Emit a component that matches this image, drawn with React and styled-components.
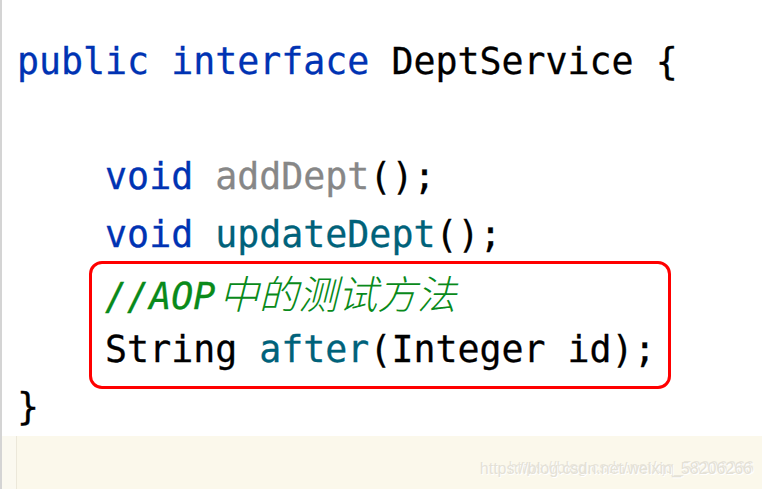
import React from "react";
import styled, { createGlobalStyle } from "styled-components";

const Global = createGlobalStyle`
  html, body {
    margin: 0;
    padding: 0;
    background: #ffffff;
    overflow: hidden;
  }
`;

const Editor = styled.div`
  width: 762px;
  height: 489px;
  box-sizing: border-box;
  border-left: 2px solid #d4d4d4;
  padding-top: 33px;
  overflow: hidden;
  font-family: "DejaVu Sans Mono", "Liberation Mono", monospace;
  font-size: 36.6px;
  color: #000000;
  -webkit-text-stroke: 0.3px currentColor;
`;

const Line = styled.div`
  height: 57.5px;
  line-height: 57.5px;
  padding-left: 15px;
  white-space: pre;
`;

const Kw = styled.span`
  color: #0033b3;
`;

const Fn = styled.span`
  color: ${(p) => (p.$unused ? "#878787" : "#00627a")};
`;

const Comment = styled.span`
  color: #098a1a;
  font-style: italic;
`;

const Cjk = styled.span`
  font-family: "Noto Sans CJK SC", sans-serif;
  font-size: 39.5px;
  font-weight: 300;
  -webkit-text-stroke: 0;
  margin-left: 4px;
`;

const Marked = styled.div`
  position: relative;

  &::before {
    content: "";
    position: absolute;
    top: -2px;
    bottom: -11px;
    left: 87px;
    width: 582px;
    box-sizing: border-box;
    border: 3px solid #ff0000;
    border-radius: 13px;
    pointer-events: none;
  }
`;

const CurrentLine = styled.div`
  position: relative;
  display: flex;
  height: 57.5px;
  background: #fbf8eb;
`;

const FoldCell = styled.div`
  width: 14px;
  background: #fbf9f0;
  border-right: 1px solid #ece8da;
`;

const Watermark = styled.span`
  position: absolute;
  right: 10px;
  top: 24px;
  font-family: "Liberation Sans", Arial, sans-serif;
  font-size: 16px;
  color: #e4e1d6;
  -webkit-text-stroke: 0;
  text-shadow: 1px 1px 0 #ffffff;
  white-space: nowrap;
`;

const WatermarkGhost = styled(Watermark)`
  right: 8px;
  top: 23px;
  color: #e8e5da;
`;

export default function App() {
  return (
    <>
      <Global />
      <Editor>
        <Line>
          <Kw>public</Kw> <Kw>interface</Kw> DeptService {"{"}
        </Line>
        <Line />
        <Line>
          {"    "}
          <Kw>void</Kw> <Fn $unused>addDept</Fn>();
        </Line>
        <Line>
          {"    "}
          <Kw>void</Kw> <Fn>updateDept</Fn>();
        </Line>
        <Marked>
          <Line>
            {"    "}
            <Comment>
              //AOP<Cjk>中的测试方法</Cjk>
            </Comment>
          </Line>
          <Line>
            {"    "}String <Fn>after</Fn>(Integer id);
          </Line>
        </Marked>
        <Line>{"}"}</Line>
        <CurrentLine>
          <FoldCell />
          <WatermarkGhost>https://blog.csdn.net/qq_58206266</WatermarkGhost>
          <Watermark>https://blog.csdn.net/weixin_58206266</Watermark>
        </CurrentLine>
      </Editor>
    </>
  );
}
